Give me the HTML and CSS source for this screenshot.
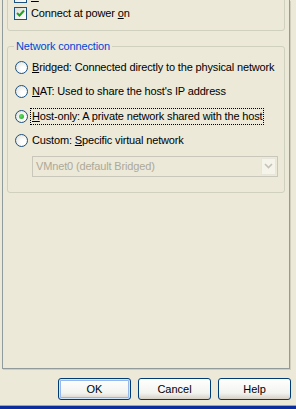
FILE: index.html
```html
<!DOCTYPE html>
<html>
<head>
<meta charset="utf-8">
<link rel="stylesheet" href="styles.css">
</head>
<body>
<div class="screen">
  <div class="panel">
    <div class="group group-status">
      <label class="check"><span class="box"></span><span><u>C</u>onnected</span></label>
      <label class="check"><span class="box checked"><svg width="9" height="9" viewBox="0 0 9 9"><path d="M1 4 L3.5 6.5 L8 1.5" fill="none" stroke="#21a121" stroke-width="2"/></svg></span><span>Connect at power <u>o</u>n</span></label>
    </div>
    <div class="group group-net">
      <div class="legend">Network connection</div>
      <div class="radio"><span class="dot"></span><span><u>B</u>ridged: Connected directly to the physical network</span></div>
      <div class="radio"><span class="dot"></span><span><u>N</u>AT: Used to share the host's IP address</span></div>
      <div class="radio"><span class="dot on"><span class="inner"></span></span><span class="focus"><u>H</u>ost-only: A private network shared with the host</span></div>
      <div class="radio"><span class="dot"></span><span>Custom: <u>S</u>pecific virtual network</span></div>
      <div class="combo"><span class="combo-text">VMnet0 (default Bridged)</span><span class="combo-btn"><svg width="9" height="6" viewBox="0 0 9 6"><path d="M1 1 L4.5 4.5 L8 1" fill="none" stroke="#c4c2b8" stroke-width="1.6"/></svg></span></div>
    </div>
  </div>
  <div class="buttons">
    <button class="btn default">OK</button>
    <button class="btn">Cancel</button>
    <button class="btn">Help</button>
  </div>
  <div class="frame-bottom"></div>
</div>
</body>
</html>
```
FILE: styles.css
```css
html, body {
  margin: 0;
  padding: 0;
}
body {
  width: 296px;
  height: 409px;
  overflow: hidden;
  background: #ece9d8;
  font-family: "Liberation Sans", Arial, sans-serif;
  font-size: 11px;
  letter-spacing: -0.15px;
  color: #000;
}
.screen {
  width: 296px;
  height: 409px;
  display: flex;
  flex-direction: column;
}
.panel {
  margin-left: 2px;
  width: 286px;
  height: 368px;
  border-left: 1px solid #919b9c;
  border-right: 1px solid #919b9c;
  border-bottom: 1px solid #919b9c;
  box-shadow: 1px 1px 0 #d0cebf;
  background: #ece9d8;
  box-sizing: content-box;
}
.group {
  margin-left: 4px;
  width: 278px;
  border: 1px solid #d0d0bf;
  border-radius: 3px;
}
.group-status {
  margin-top: -28px;
  height: 59px;
  padding: 2px 0 0 6px;
  box-sizing: border-box;
  display: flex;
  flex-direction: column;
  justify-content: flex-end;
  gap: 4px;
  padding-bottom: 10px;
}
.check {
  display: flex;
  align-items: center;
  gap: 4px;
  height: 13px;
  line-height: 13px;
}
.box {
  width: 11px;
  height: 11px;
  border: 1px solid #1c5180;
  background: linear-gradient(135deg, #dcdcd5, #fff);
  display: flex;
  align-items: center;
  justify-content: center;
}
.group-net {
  margin-top: 15px;
  height: 147px;
  box-sizing: border-box;
  padding: 14px 0 0 7px;
  position: relative;
}
.legend {
  position: absolute;
  top: -7px;
  left: 6px;
  padding: 0 2px;
  background: #ece9d8;
  color: #0046d5;
  line-height: 13px;
}
.radio {
  display: flex;
  align-items: center;
  gap: 4px;
  height: 13px;
  line-height: 13px;
  margin-bottom: 11.4px;
}
.dot {
  width: 11px;
  height: 11px;
  border-radius: 50%;
  border: 1px solid #1c5180;
  background: radial-gradient(circle at 65% 65%, #fff 20%, #dcdcd5 100%);
  display: flex;
  align-items: center;
  justify-content: center;
  flex: none;
}
.inner {
  width: 5px;
  height: 5px;
  border-radius: 50%;
  background: radial-gradient(circle at 40% 40%, #5fe05f, #21a121);
}
.focus {
  outline: 1px dotted #000;
  outline-offset: 0;
  padding: 1px 0 1px 1px;
  margin-left: -1px;
}
.combo {
  margin-left: 17px;
  margin-top: -3px;
  width: 246px;
  height: 21px;
  box-sizing: border-box;
  border: 1px solid #c9c7ba;
  background: #ece9d8;
  display: flex;
  align-items: center;
  justify-content: space-between;
}
.combo-text {
  color: #aca899;
  padding-left: 3px;
}
.combo-btn {
  width: 15px;
  height: 17px;
  margin-right: 1px;
  background: #f5f4ea;
  border: 1px solid #e8e6da;
  box-sizing: border-box;
  display: flex;
  align-items: center;
  justify-content: center;
}
.buttons {
  display: flex;
  justify-content: flex-end;
  gap: 7px;
  padding-right: 5px;
  margin-top: 9px;
}
.btn {
  width: 73px;
  height: 22px;
  font-family: "Liberation Sans", Arial, sans-serif;
  font-size: 11px;
  color: #000;
  border: 1px solid #003c74;
  border-radius: 3px;
  background: linear-gradient(#ffffff, #f3f3ef 70%, #d6d0c5);
  padding: 0;
}
.btn.default {
  box-shadow: inset 0 0 0 1px #cee7ff, inset 0 0 0 2px #98b8ea;
}
.frame-bottom {
  margin-top: auto;
  height: 3px;
  border-top: 1px solid #8aa6dc;
  background: #0b2e9c;
}
```
